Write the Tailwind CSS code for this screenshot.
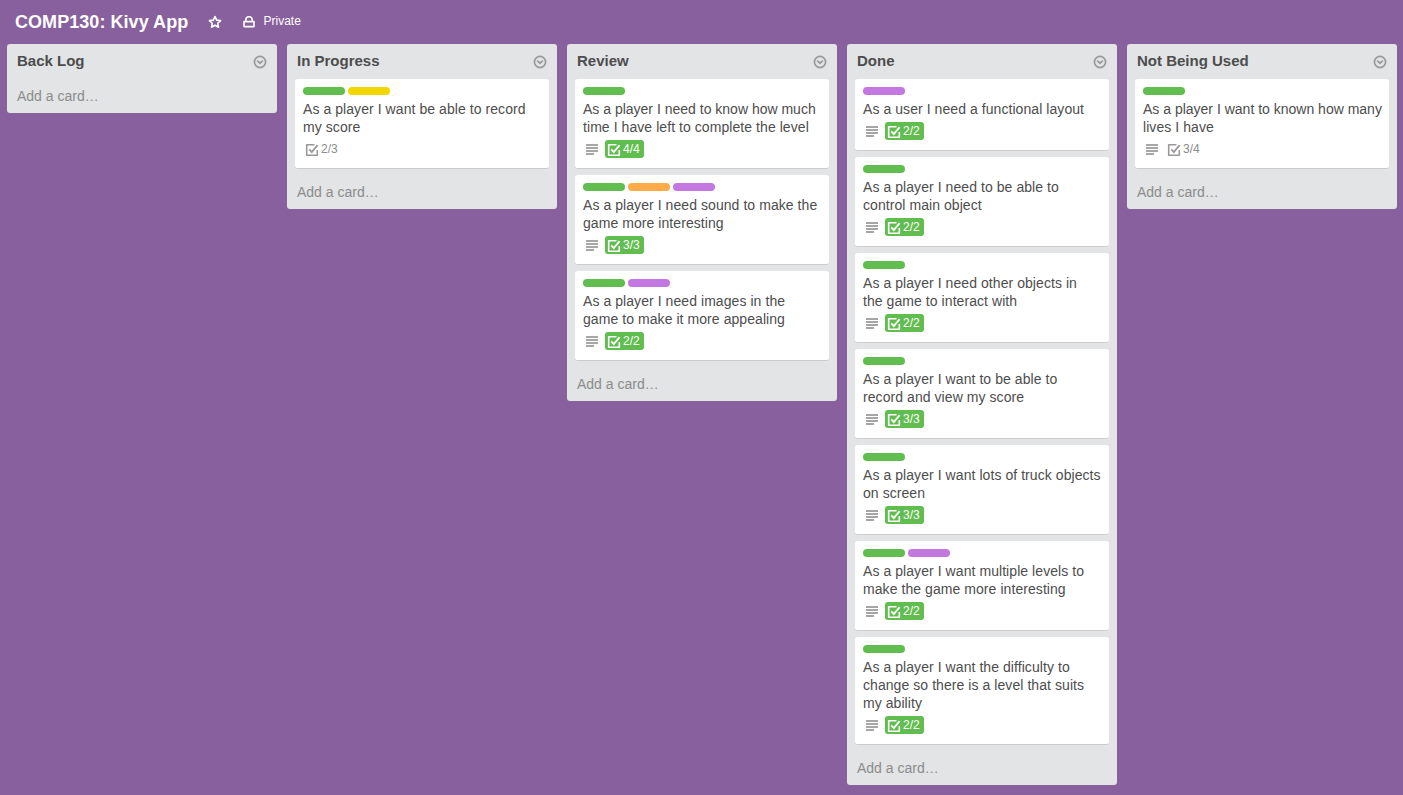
<!DOCTYPE html>
<html lang="en">
<head>
<meta charset="utf-8">
<title>COMP130: Kivy App</title>
<script src="https://cdn.jsdelivr.net/npm/@tailwindcss/browser@4"></script>
</head>
<body class="h-screen overflow-hidden bg-[#89609e] font-['Liberation_Sans',Arial,sans-serif] text-sm text-[#4d4d4d]">
<svg class="hidden">
  <symbol id="lines" viewBox="0 0 12 12"><path d="M0 1h12M0 4h12M0 7h12M0 10h8" stroke="currentColor" stroke-width="2" fill="none"/></symbol>
  <symbol id="check" viewBox="0 0 14 14"><path d="M9.5 1.7H1.7v10.6h10.6V7" stroke="currentColor" stroke-width="1.6" fill="none" stroke-linejoin="round"/><path d="M4.3 6.4l2.5 2.7L12.6 2.2" stroke="currentColor" stroke-width="1.8" fill="none"/></symbol>
  <symbol id="chevron" viewBox="0 0 14 14"><circle cx="7" cy="7" r="5.6" stroke="currentColor" stroke-width="1.7" fill="none"/><path d="M4.2 5.7L7 8.3l2.8-2.6" stroke="currentColor" stroke-width="1.8" fill="none"/></symbol>
</svg>
<header class="flex h-[44px] items-center pl-[15px] text-white">
  <h1 class="w-[173px] text-[18px] leading-[22px] font-bold tracking-[0.05px] whitespace-nowrap">COMP130: Kivy App</h1>
  <svg class="ml-5 size-[14px]" viewBox="0 0 14 14"><path d="M7 1.5l1.7 3.6 3.9.5-2.9 2.7.8 3.9L7 10.2l-3.5 2 .8-3.9-2.9-2.7 3.9-.5z" fill="none" stroke="currentColor" stroke-width="1.6" stroke-linejoin="round"/></svg>
  <svg class="ml-5 size-[14px]" viewBox="0 0 14 14"><path d="M2 6.6h10v5H2zM3.8 6.4V5a3.2 3.2 0 0 1 6.4 0v1.4" fill="none" stroke="currentColor" stroke-width="1.6" stroke-linejoin="round"/></svg>
  <span class="ml-[7.5px] pb-[2px] text-xs">Private</span>
</header>
<main id="board" class="flex items-start gap-[10px] pl-[7px]"></main>
<script>
const colors = {g: 'bg-[#61bd4f]', y: 'bg-[#f2d600]', o: 'bg-[#ffab4a]', p: 'bg-[#c377e0]'};
// Card: label colours, title lines, has description, checklist count, checklist complete
const lists = [
  ['Back Log', []],
  ['In Progress', [['gy', 'As a player I want be able to record|my score', 0, '2/3', 0]]],
  ['Review', [
    ['g', 'As a player I need to know how much|time I have left to complete the level', 1, '4/4', 1],
    ['gop', 'As a player I need sound to make the|game more interesting', 1, '3/3', 1],
    ['gp', 'As a player I need images in the|game to make it more appealing', 1, '2/2', 1]]],
  ['Done', [
    ['p', 'As a user I need a functional layout', 1, '2/2', 1],
    ['g', 'As a player I need to be able to|control main object', 1, '2/2', 1],
    ['g', 'As a player I need other objects in|the game to interact with', 1, '2/2', 1],
    ['g', 'As a player I want to be able to|record and view my score', 1, '3/3', 1],
    ['g', 'As a player I want lots of truck objects|on screen', 1, '3/3', 1],
    ['gp', 'As a player I want multiple levels to|make the game more interesting', 1, '2/2', 1],
    ['g', 'As a player I want the difficulty to|change so there is a level that suits|my ability', 1, '2/2', 1]]],
  ['Not Being Used', [['g', 'As a player I want to known how many|lives I have', 1, '3/4', 0]]]
];
const card = ([labels, title, desc, count, done]) => `
  <article class="mb-[6px] rounded-[3px] border-b border-[#cccccc] bg-white px-2 pt-2 pb-[10px]">
    <div class="mb-[5px] flex gap-[3px]">${[...labels].map(c => `<span class="h-2 w-[42px] rounded ${colors[c]}"></span>`).join('')}</div>
    <p class="leading-[18px] whitespace-nowrap">${title.split('|').map(t => `<span class="${/known|know how/.test(t) ? 'tracking-normal' : 'tracking-[0.065px]'}">${t}</span>`).join('<br>')}</p>
    <div class="mt-1 flex h-[18px] items-center text-xs leading-[18px] text-[#8c8c8c]">
      ${desc ? '<svg class="mt-[2px] mr-[7px] ml-[3px] size-3 text-[#a6a6a6]"><use href="#lines"/></svg>' : ''}
      <span class="${done ? 'flex h-[18px] items-center rounded-[3px] bg-[#61bd4f] pr-1 pl-[2px] text-white' : 'flex h-[18px] items-center pl-[2px]'}">
        <svg class="${done ? 'mt-[2px] mr-[2px] size-[14px]' : 'mt-[2px] mr-[2px] size-[14px] text-[#999999]'}"><use href="#check"/></svg>${count}
      </span>
    </div>
  </article>`;
document.getElementById('board').innerHTML = lists.map(([name, cards]) => `
  <section class="w-[270px] shrink-0 rounded-[3px] bg-[#e2e4e6] px-2">
    <div class="flex h-[35px] items-center justify-between pr-[2px] pl-[2px]">
      <h2 class="pb-[2px] text-[15px] leading-[18px] font-bold">${name}</h2>
      <svg class="size-[14px] text-[#999999]"><use href="#chevron"/></svg>
    </div>
    ${cards.map(card).join('')}
    <div class="flex h-[34px] items-center pl-[2px] text-[#8c8c8c]">Add a card…</div>
  </section>`).join('');
</script>
</body>
</html>
